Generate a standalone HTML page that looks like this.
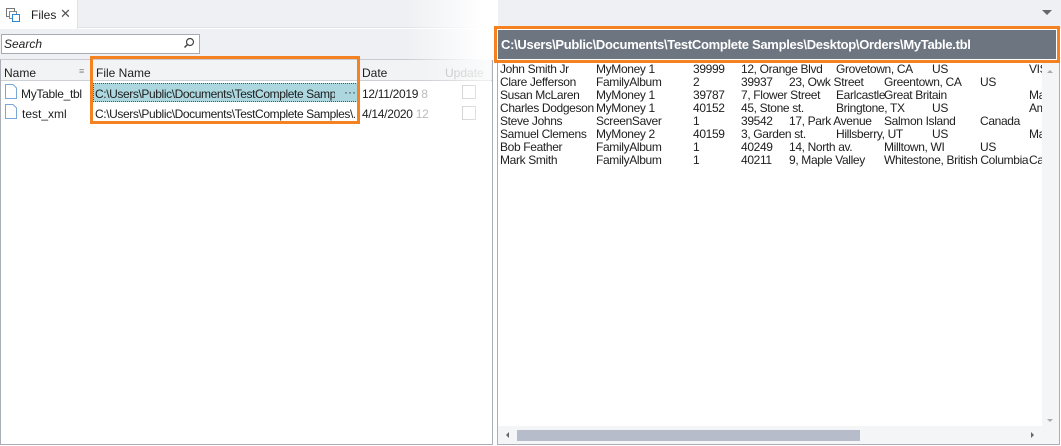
<!DOCTYPE html>
<html><head><meta charset="utf-8"><style>
*{margin:0;padding:0;box-sizing:border-box}
body{width:1061px;height:446px;overflow:hidden;background:#fff;font-family:"Liberation Sans",Arial,sans-serif;font-size:12px;color:#1e1e1e;position:relative}
.a{position:absolute;white-space:nowrap}
.d .a{letter-spacing:-0.35px}
</style></head><body>
<div class="a" style="left:0;top:0;width:1061px;height:28px;background:#eef0f3;border-bottom:1px solid #dfe2e6"></div>
<div class="a" style="left:0;top:0;width:78px;height:29px;background:#fff;border-right:1px solid #dfe2e6"></div>
<svg class="a" style="left:5px;top:7px" width="16" height="16" viewBox="0 0 16 16"><rect x="1.5" y="1.5" width="8" height="8" fill="#fff" stroke="#777"/><rect x="4.5" y="4.5" width="7" height="7" fill="#fff" stroke="#888"/><rect x="7.5" y="7.5" width="7" height="7" fill="#fff" stroke="#2a8ad8"/></svg>
<div class="a" style="left:31px;top:8px;font-size:12px">Files</div>
<div class="a" style="left:60px;top:6px;font-size:13px;color:#555">✕</div>
<div class="a" style="left:1042px;top:10px;width:0;height:0;border-left:5px solid transparent;border-right:5px solid transparent;border-top:5px solid #666"></div>
<div class="a" style="left:0;top:29px;width:494px;height:30px;background:#eef0f3"></div>
<div class="a" style="left:1px;top:34px;width:199px;height:20px;background:#fff;border:1px solid #a5aab3"></div>
<div class="a" style="left:4px;top:37px;font-style:italic">Search</div>
<svg class="a" style="left:183px;top:37px" width="12" height="12" viewBox="0 0 12 12"><circle cx="7" cy="5" r="3.5" fill="none" stroke="#444" stroke-width="1.2"/><path d="M4.5 7.5L1.5 10.5" stroke="#444" stroke-width="1.5"/></svg>
<div class="a" style="left:0;top:59px;width:493px;height:386px;border:1px solid #a9aeb8;border-top:1px solid #c8ccd2;background:#fff"></div>
<div class="a" style="left:1px;top:60px;width:491px;height:21px;background:#f2f3f5;border-bottom:1px solid #cdd0d5"></div>
<div class="a" style="left:90px;top:60px;width:1px;height:21px;background:#cdd0d5"></div>
<div class="a" style="left:358px;top:60px;width:1px;height:21px;background:#cdd0d5"></div>
<div class="a" style="left:4px;top:66px">Name</div>
<div class="a" style="left:79px;top:66px;font-size:9px;color:#888">≡</div>
<div class="a" style="left:96px;top:66px">File Name</div>
<div class="a" style="left:362px;top:66px">Date</div>
<div class="a" style="left:445px;top:66px;color:#bbb">Update</div>
<svg class="a" style="left:5px;top:84px" width="12" height="15" viewBox="0 0 12 15"><path d="M0.5 0.5H8L11.5 4V14.5H0.5Z" fill="#fff" stroke="#7aa7d8"/></svg>
<svg class="a" style="left:5px;top:104px" width="12" height="15" viewBox="0 0 12 15"><path d="M0.5 0.5H8L11.5 4V14.5H0.5Z" fill="#fff" stroke="#7aa7d8"/></svg>
<div class="a" style="left:21px;top:87px;letter-spacing:-0.3px">MyTable_tbl</div>
<div class="a" style="left:22px;top:107px">test_xml</div>
<div class="a" style="left:93px;top:83px;width:265px;height:19px;background:#acd7df;border:1px dotted #555"></div>
<div class="a" style="left:95px;top:87px;width:240px;overflow:hidden;letter-spacing:-0.4px">C:\Users\Public\Documents\TestComplete Sampl...</div>
<div class="a" style="left:344px;top:85px;color:#333">···</div>
<div class="a" style="left:95px;top:107px;width:260px;overflow:hidden;letter-spacing:-0.4px">C:\Users\Public\Documents\TestComplete Samples\...</div>
<div class="a" style="left:362px;top:87px;letter-spacing:-0.3px">12/11/2019 <span style="color:#bbb">8</span></div>
<div class="a" style="left:362px;top:107px;letter-spacing:-0.3px">4/14/2020 <span style="color:#bbb">12</span></div>
<div class="a" style="left:462px;top:85px;width:14px;height:14px;border:1px solid #bbb;background:#fff"></div>
<div class="a" style="left:462px;top:106px;width:14px;height:14px;border:1px solid #bbb;background:#fff"></div>
<div class="a" style="left:90px;top:56px;width:270px;height:68px;border:3px solid #f58220"></div>
<div class="a" style="left:405px;top:0;width:92px;height:60px;background:linear-gradient(90deg,rgba(255,255,255,0),#fff 85%)"></div>
<div class="a" style="left:425px;top:60px;width:66px;height:70px;background:linear-gradient(90deg,rgba(255,255,255,0),rgba(255,255,255,.7))"></div>
<div class="a" style="left:494px;top:0;width:4px;height:446px;background:#fff"></div>
<div class="a" style="left:497px;top:58px;width:563px;height:387px;border:1px solid #a9aeb8;background:#fff"></div>
<div class="a" style="left:494px;top:26px;width:566px;height:37px;border:3px solid #f58220;background:#fff"></div>
<div class="a" style="left:498px;top:30px;width:558px;height:29px;background:#6d7580"></div>
<div class="a" style="left:501px;top:37px;color:#fff;font-weight:bold;font-size:13px;letter-spacing:-0.3px">C:\Users\Public\Documents\TestComplete Samples\Desktop\Orders\MyTable.tbl</div>
<div class="d" style="position:absolute;left:0;top:0;width:1042px;height:200px;overflow:hidden;font-size:12px;line-height:13px">
<div class="a" style="left:500px;top:63px">John Smith Jr</div><div class="a" style="left:596px;top:63px">MyMoney 1</div><div class="a" style="left:693px;top:63px">39999</div><div class="a" style="left:741px;top:63px">12, Orange Blvd</div><div class="a" style="left:836px;top:63px">Grovetown, CA</div><div class="a" style="left:932px;top:63px">US</div><div class="a" style="left:1029px;top:63px">VIS</div>
<div class="a" style="left:500px;top:76px">Clare Jefferson</div><div class="a" style="left:596px;top:76px">FamilyAlbum</div><div class="a" style="left:693px;top:76px">2</div><div class="a" style="left:741px;top:76px">39937</div><div class="a" style="left:789px;top:76px">23, Owk Street</div><div class="a" style="left:884px;top:76px">Greentown, CA</div><div class="a" style="left:980px;top:76px">US</div>
<div class="a" style="left:500px;top:89px">Susan McLaren</div><div class="a" style="left:596px;top:89px">MyMoney 1</div><div class="a" style="left:693px;top:89px">39787</div><div class="a" style="left:741px;top:89px">7, Flower Street</div><div class="a" style="left:836px;top:89px">Earlcastle</div><div class="a" style="left:884px;top:89px">Great Britain</div><div class="a" style="left:1029px;top:89px">Ma</div>
<div class="a" style="left:500px;top:102px">Charles Dodgeson</div><div class="a" style="left:596px;top:102px">MyMoney 1</div><div class="a" style="left:693px;top:102px">40152</div><div class="a" style="left:741px;top:102px">45, Stone st.</div><div class="a" style="left:836px;top:102px">Bringtone, TX</div><div class="a" style="left:932px;top:102px">US</div><div class="a" style="left:1029px;top:102px">Am</div>
<div class="a" style="left:500px;top:115px">Steve Johns</div><div class="a" style="left:596px;top:115px">ScreenSaver</div><div class="a" style="left:693px;top:115px">1</div><div class="a" style="left:741px;top:115px">39542</div><div class="a" style="left:789px;top:115px">17, Park Avenue</div><div class="a" style="left:884px;top:115px">Salmon Island</div><div class="a" style="left:980px;top:115px">Canada</div>
<div class="a" style="left:500px;top:128px">Samuel Clemens</div><div class="a" style="left:596px;top:128px">MyMoney 2</div><div class="a" style="left:693px;top:128px">40159</div><div class="a" style="left:741px;top:128px">3, Garden st.</div><div class="a" style="left:836px;top:128px">Hillsberry, UT</div><div class="a" style="left:932px;top:128px">US</div><div class="a" style="left:1029px;top:128px">Ma</div>
<div class="a" style="left:500px;top:141px">Bob Feather</div><div class="a" style="left:596px;top:141px">FamilyAlbum</div><div class="a" style="left:693px;top:141px">1</div><div class="a" style="left:741px;top:141px">40249</div><div class="a" style="left:789px;top:141px">14, North av.</div><div class="a" style="left:884px;top:141px">Milltown, WI</div><div class="a" style="left:980px;top:141px">US</div>
<div class="a" style="left:500px;top:154px">Mark Smith</div><div class="a" style="left:596px;top:154px">FamilyAlbum</div><div class="a" style="left:693px;top:154px">1</div><div class="a" style="left:741px;top:154px">40211</div><div class="a" style="left:789px;top:154px">9, Maple Valley</div><div class="a" style="left:884px;top:154px">Whitestone, British Columbia</div><div class="a" style="left:1029px;top:154px">Ca</div>
</div>
<div class="a" style="left:1042px;top:63px;width:17px;height:363px;background:#f4f5f7"></div>
<div class="a" style="left:1047px;top:70px;width:0;height:0;border-left:3px solid transparent;border-right:3px solid transparent;border-bottom:3px solid #aaa"></div>
<div class="a" style="left:1047px;top:419px;width:0;height:0;border-left:3px solid transparent;border-right:3px solid transparent;border-top:3px solid #aaa"></div>
<div class="a" style="left:498px;top:426px;width:561px;height:18px;background:#f4f5f7"></div>
<div class="a" style="left:517px;top:430px;width:343px;height:11px;background:#b6bcca"></div>
<div class="a" style="left:506px;top:432px;width:0;height:0;border-top:3px solid transparent;border-bottom:3px solid transparent;border-right:3px solid #666"></div>
<div class="a" style="left:1031px;top:432px;width:0;height:0;border-top:3px solid transparent;border-bottom:3px solid transparent;border-left:3px solid #666"></div>
</body></html>
